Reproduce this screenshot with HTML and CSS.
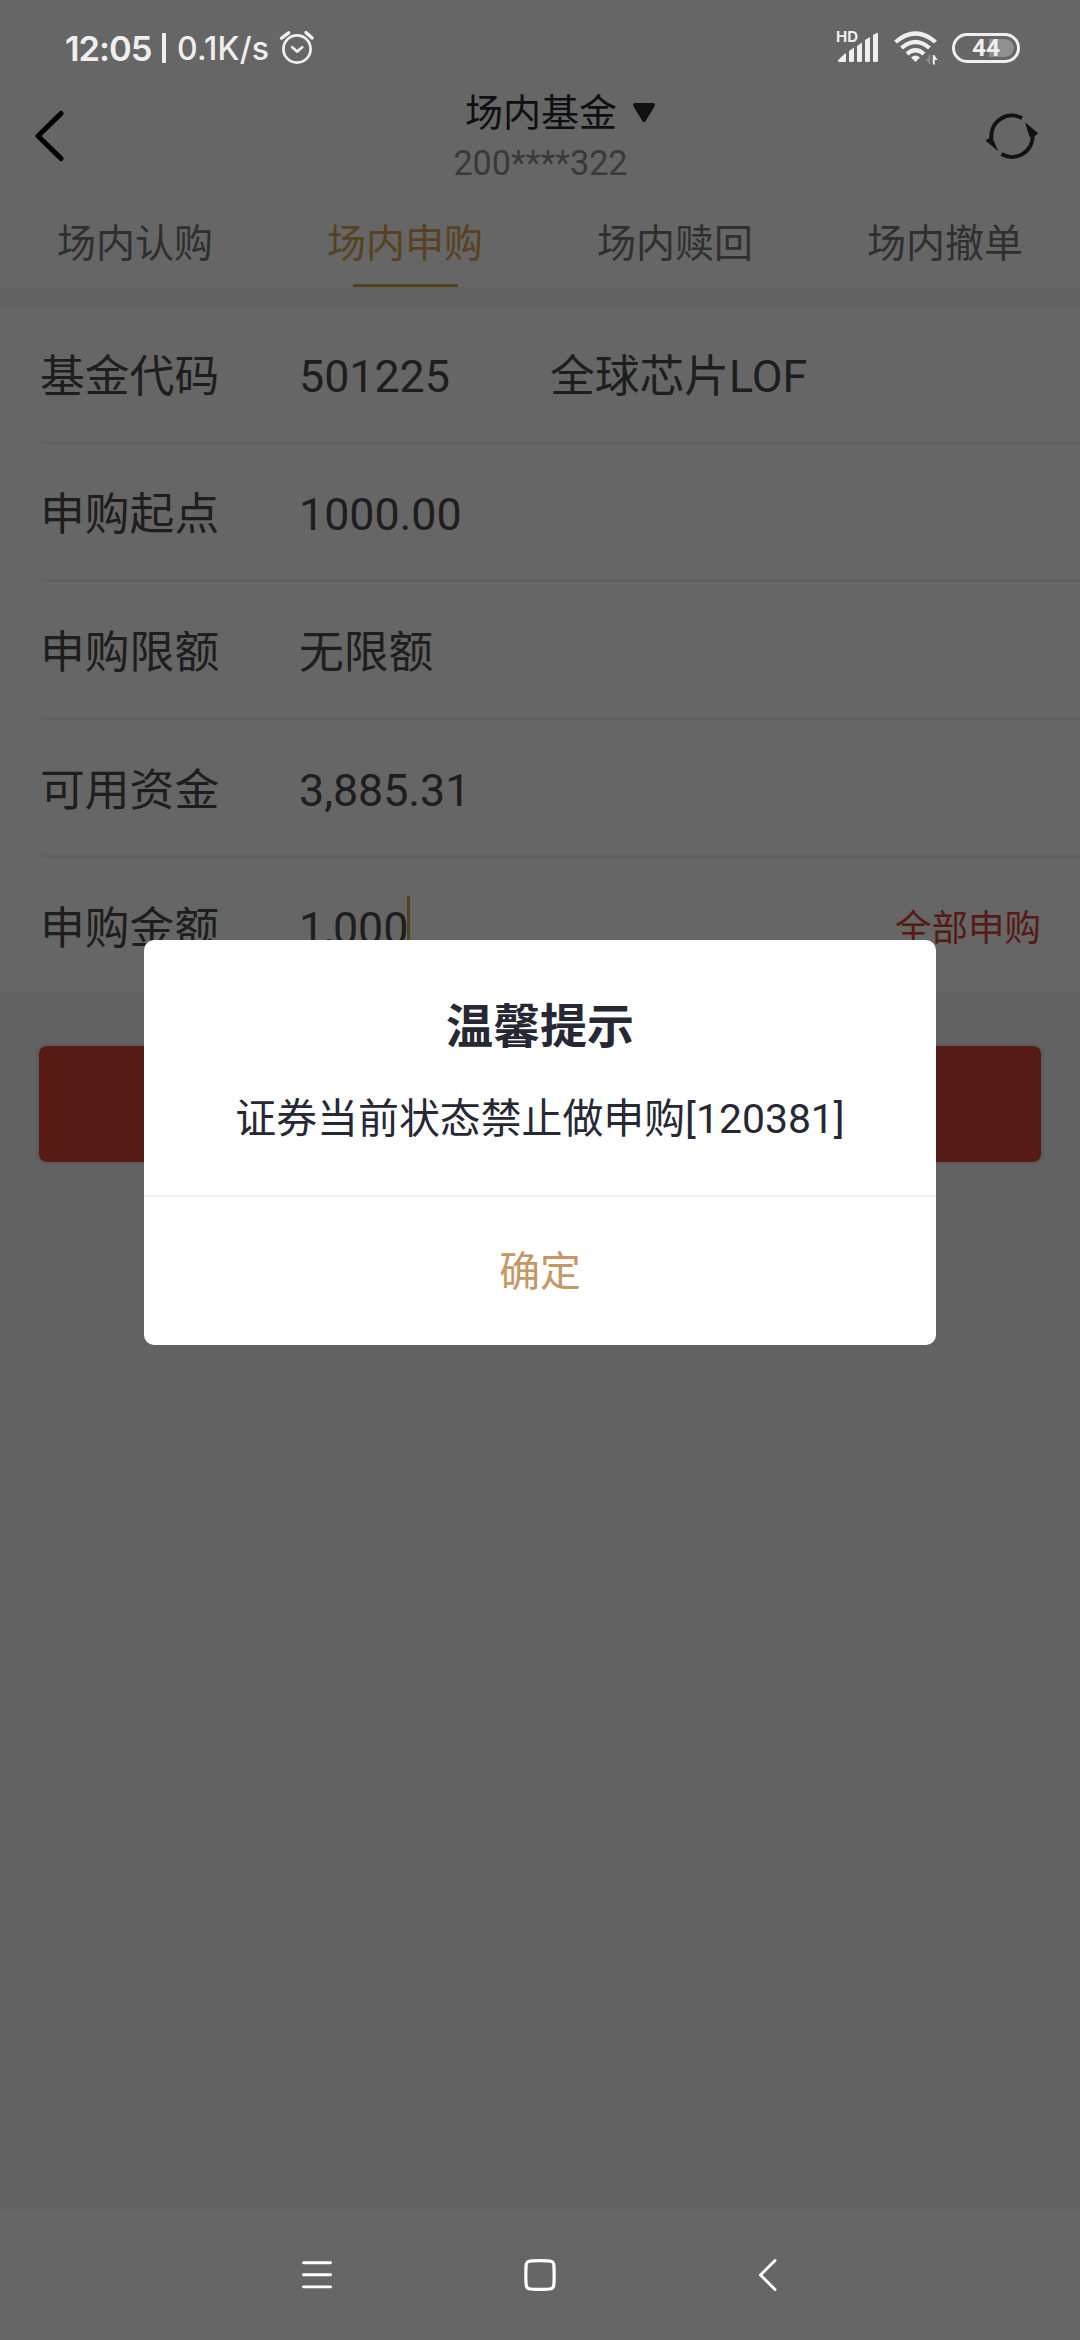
FILE: index.html
```html
<!DOCTYPE html>
<html lang="zh-CN">
<head>
<meta charset="utf-8">
<title>场内基金</title>
<link rel="stylesheet" href="styles.css">
</head>
<body>
<div class="screen">
  <header class="status">
    <span class="status-time">12:05</span>
    <i class="status-sep"></i>
    <span class="status-speed">0.1K/s</span>
    <svg class="status-alarm" width="36" height="36" viewBox="0 0 36 36" fill="none" stroke="#efefef" stroke-width="2.7" stroke-linecap="round" stroke-linejoin="round">
      <circle cx="18" cy="19" r="13.6"/><path d="M13.2 17.2l4.8 4.4 5.2-4.4"/><path stroke-width="3.4" d="M2.6 8.2L9.6 2.8M33.200 8L27 2.6"/>
    </svg>
    <span class="spacer"></span>
    <span class="signal">
      <svg width="42" height="32" viewBox="0 0 42 32" fill="#efefef"><path d="M0 29v-1l7-6.500h1V29q0 1-1 1H1q-1 0-1-1zM11 19l5-3.500V29q0 1-1 1h-3q-1 0-1-1zM19 14l5-3.500V29q0 1-1 1h-3q-1 0-1-1zM27 8l5-3V29q0 1-1 1h-3q-1 0-1-1zM35 3l4-2.200q1 0 1 1V29q0 1-1 1h-3q-1 0-1-1z"/></svg>
      <b class="hd">HD</b>
    </span>
    <svg class="wifi" width="44" height="36" viewBox="0 0 44 36" fill="none" stroke="#efefef" stroke-width="4.200">
      <path d="M1.500 12Q21.500-5 41.500 12"/><path d="M7.500 18Q21.500 6 35.500 18"/><path d="M13 24Q21.500 16.500 30 24"/>
      <path d="M17 27.500q4.500-4 9 0L21.500 32z" fill="#efefef" stroke="none"/>
      <path d="M36.500 25v9h-1.400l-3.600-5h3v-4z" fill="#8a8a8a" stroke="none"/><path d="M38.800 34.500v-9.500h1.500l3.300 5h-2.800v4.500z" fill="#efefef" stroke="none"/>
    </svg>
    <span class="battery"><i class="battery-level"></i><b class="battery-text">44</b></span>
  </header>

  <div class="titlebar">
    <svg class="back" width="40" height="60" viewBox="0 0 40 60" fill="none" stroke="#000" stroke-width="5.200" stroke-linecap="round" stroke-linejoin="round"><path d="M31 7.500L8 30l23 22.500"/></svg>
    <div class="heading">
      <div class="heading-name">场内基金<svg class="caret" width="24" height="20" viewBox="0 0 24 20"><path d="M3 2h18L12 17z" fill="#262833" stroke="#262833" stroke-width="4" stroke-linejoin="round"/></svg></div>
      <div class="heading-account">200****322</div>
    </div>
    <svg class="refresh" width="54" height="50" viewBox="0 0 54 50" fill="none" stroke="#2b2d36" stroke-width="4">
      <path d="M37 7.200A20.600 20.600 0 0 0 6.500 28"/><path d="M16.500 43A20.600 20.600 0 0 0 47.500 23"/>
      <path d="M.5 29.500L7 25.500l6.200 14.800L2.800 31.500zM40 11.200l13 10.800-2 2.500-6.500 1.500z" fill="#2b2d36" stroke="none"/>
    </svg>
  </div>

  <nav class="tabs">
    <span class="tab">场内认购</span>
    <span class="tab tab-active">场内申购</span>
    <span class="tab">场内赎回</span>
    <span class="tab">场内撤单</span>
  </nav>

  <main class="content">
    <section class="form">
      <div class="row row-first"><span class="label">基金代码</span><span class="value code">501225</span><span class="value">全球芯片LOF</span></div>
      <div class="row"><span class="label">申购起点</span><span class="value">1000.00</span></div>
      <div class="row"><span class="label">申购限额</span><span class="value">无限额</span></div>
      <div class="row"><span class="label">可用资金</span><span class="value">3,885.31</span></div>
      <div class="row row-last"><span class="label">申购金额</span><span class="value">1,000</span><i class="cursor"></i><span class="all">全部申购</span></div>
    </section>
    <div class="submit"></div>
  </main>

  <footer class="navbar">
    <svg width="32" height="32" viewBox="0 0 32 32" stroke="#fff" stroke-width="2.900" stroke-linecap="round"><path d="M1.500 3.700h27M1.500 15.800h27M1.500 27.900h27"/></svg>
    <svg width="34" height="34" viewBox="0 0 34 34" fill="none" stroke="#fff" stroke-width="3.200"><path d="M17 2.600c12 0 13 .5 13.700 3.500.6 4 .6 17.800 0 21.800-.7 3-1.700 3.500-13.700 3.500s-13-.5-13.700-3.500c-.6-4-.6-17.800 0-21.800C4 3.100 5 2.600 17 2.600z"/></svg>
    <svg width="20" height="34" viewBox="0 0 20 34" fill="none" stroke="#fff" stroke-width="3" stroke-linecap="round" stroke-linejoin="round"><path d="M17 2.500L2.500 17 17 31.500"/></svg>
  </footer>

  <div class="mask">
    <div class="dialog">
      <div class="dialog-body">
        <div class="dialog-title">温馨提示</div>
        <div class="dialog-message">证券当前状态禁止做申购[120381]</div>
      </div>
      <div class="dialog-confirm">确定</div>
    </div>
  </div>
</div>
</body>
</html>
```
FILE: styles.css
```css
* { box-sizing: border-box; }
body { margin: 0; font-family: Roboto, "Noto Sans CJK SC", sans-serif; }
svg { display: block; flex: none; }
.screen {
  position: relative;
  width: 1080px;
  height: 2340px;
  overflow: hidden;
  display: flex;
  flex-direction: column;
  background: #fff;
}

/* system status bar */
.status {
  position: relative;
  z-index: 2;
  height: 96px;
  padding: 0 60px 0 65px;
  display: flex;
  align-items: center;
  color: #efefef;
  font-family: Inter, sans-serif;
  font-weight: 600;
  white-space: nowrap;
}
.status-time { width: 97px; font-size: 34.5px; letter-spacing: -1px; }
.status-sep { width: 4px; height: 30px; background: #efefef; }
.status-speed { margin-left: 11px; width: 102px; font-size: 32px; font-weight: 500; letter-spacing: 0.2px; }
.spacer { flex: 1; }
.signal { position: relative; margin-right: 14px; }
.hd { position: absolute; left: -2px; top: -3px; font: 700 15px/15px Inter, sans-serif; }
.wifi { margin-right: 14px; }
.battery {
  position: relative;
  width: 68px;
  height: 30px;
  border: 3px solid #efefef;
  border-radius: 15px;
  display: flex;
  align-items: center;
  justify-content: center;
}
.battery-level {
  position: absolute;
  right: 3px;
  top: 3px;
  width: 25px;
  height: 18px;
  border-radius: 0 9px 9px 0;
  background: #8f8f8f;
}
.battery-text { position: relative; font: 700 24.5px/24px Roboto, sans-serif; }

/* title bar */
.titlebar {
  height: 103px;
  padding: 0 41px 0 30px;
  display: flex;
  align-items: flex-start;
  justify-content: space-between;
}
.back { margin-top: 10px; }
.heading { display: flex; flex-direction: column; align-items: center; margin-left: 26px; margin-top: -11px; }
.heading-name {
  display: flex;
  align-items: center;
  gap: 15px;
  margin-left: 40px;
  font-size: 38px;
  line-height: 56px;
  color: #262833;
}
.heading-account { font-size: 34.2px; line-height: 40px; color: #8f8f8f; margin-top: 2px; }
.refresh { margin-top: 15px; }

.tabs { display: flex; height: 88px; }
.tab {
  flex: 1;
  display: flex;
  align-items: center;
  justify-content: center;
  padding-bottom: 7px;
  font-size: 39px;
  color: #777;
}
.tab-active {
  color: #d8a64e;
  background: linear-gradient(#d2a44a, #d2a44a) center bottom / 105px 3px no-repeat;
}

/* purchase form */
.content { flex: 1; padding-top: 22px; background: #f5f5f5; }
.form { background: #fff; padding-left: 41px; }
.row {
  height: 138px;
  padding-top: 7px;
  display: flex;
  align-items: center;
  border-bottom: 3px solid #f0f0f0;
  font-size: 44.8px;
  line-height: 66px;
  color: #4b4b4b;
}
.row-first { height: 135px; padding-top: 4px; }
.row-last { height: 135px; border-bottom: 0; }
.label { width: 259px; margin-left: -1px; }
.code { width: 251px; }
.value { letter-spacing: -0.05px; }
.cursor { width: 3px; height: 60px; margin-top: -7px; margin-left: -1px; background: #d2a44a; }
.all { margin: 0 39px 0 auto; font-size: 36.5px; color: #d54432; }
.submit {
  height: 116px;
  margin: 53px 39px 0;
  border-radius: 8px;
  background: #d54432;
  box-shadow: 0 0 5px rgba(0, 0, 0, 0.2);
}

/* system navigation */
.navbar {
  position: relative;
  z-index: 2;
  height: 130px;
  padding: 0 302px;
  display: flex;
  align-items: center;
  justify-content: space-between;
}
.navbar svg:nth-child(2) { margin-right: 12px; }

/* alert */
.mask {
  position: absolute;
  inset: 0;
  z-index: 1;
  padding-top: 940px;
  background: rgba(0, 0, 0, 0.6);
}
.dialog {
  width: 792px;
  height: 405px;
  margin: 0 auto;
  border-radius: 10px;
  background: #fff;
  text-align: center;
  color: #262833;
}
.dialog-body { height: 257px; padding-top: 52px; border-bottom: 2px solid #eee; }
.dialog-title { font-size: 47px; line-height: 70px; font-weight: 700; }
.dialog-message { margin-top: 27px; font-size: 40.9px; line-height: 60px; }
.dialog-confirm { font-size: 40.8px; line-height: 150px; color: #c79665; }
```
